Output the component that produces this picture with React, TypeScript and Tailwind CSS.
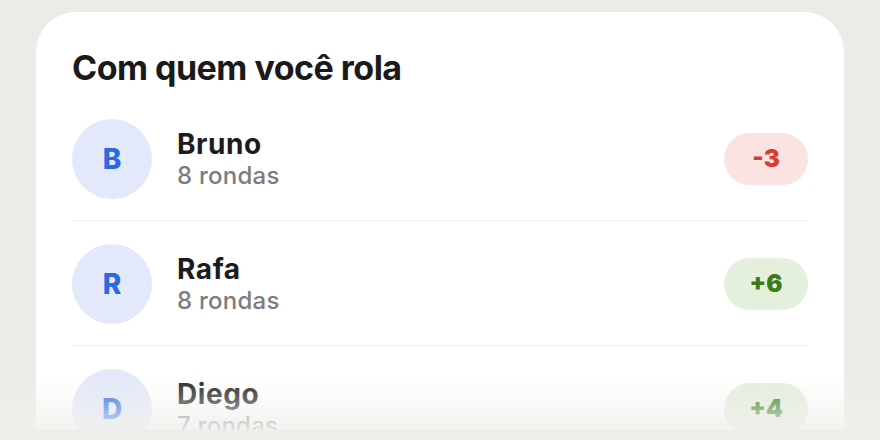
import React from "react"

type Player = {
  name: string
  rounds: number
  score: number
}

const players: Player[] = [
  { name: "Bruno", rounds: 8, score: -3 },
  { name: "Rafa", rounds: 8, score: 6 },
  { name: "Diego", rounds: 7, score: 4 },
  { name: "Lucas", rounds: 5, score: -1 },
]

const PlayerRow = ({ player }: { player: Player }) => {
  const positive = player.score > 0
  return (
    <div className="flex items-center border-b border-[#ededed] pt-[23px] pb-[21px]">
      <div className="flex h-20 w-20 shrink-0 items-center justify-center rounded-full bg-[#e3e9fa]">
        <span className="text-[28px] font-extrabold text-[#2c6ae0]">{player.name[0]}</span>
      </div>
      <div className="ml-[25px] flex flex-1 flex-col">
        <span className="text-[28px] font-bold leading-[32px] tracking-[0.02em] text-[#1c1c1e]">{player.name}</span>
        <span className="mt-[2px] text-[24px] font-medium leading-[28px] tracking-[0.01em] text-[#7c7c80]">{player.rounds} rondas</span>
      </div>
      <div
        className={
          positive
            ? "flex h-[52px] w-[84px] items-center justify-center rounded-full bg-[#e4efdc] text-[24px] font-black text-[#3a7a17]"
            : "flex h-[52px] w-[84px] items-center justify-center rounded-full bg-[#fbe3e2] text-[24px] font-black text-[#d63d33]"
        }
      >
        {positive ? `+${player.score}` : `${player.score}`}
      </div>
    </div>
  )
}

export default function App() {
  return (
    <div className="relative h-[440px] w-[880px] overflow-hidden bg-[#ebebe8] px-9 pt-3 font-['Inter',sans-serif]">
      <div className="h-[470px] rounded-t-[40px] bg-white px-9 pt-[36px]">
        <h2 className="text-[34px] font-bold leading-[39px] tracking-[-0.015em] text-[#1a1a1c]">Com quem você rola</h2>
        <div className="mt-[9px]">
          {players.map((p) => (
            <PlayerRow key={p.name} player={p} />
          ))}
        </div>
      </div>
      <div className="pointer-events-none absolute bottom-0 left-0 right-0 flex flex-col">
        <div className="h-[56px] bg-[linear-gradient(to_bottom,rgba(241,241,238,0)_0%,rgba(241,241,238,0.35)_45%,rgba(240,240,237,0.88)_100%)]" />
        <div className="h-[10px] bg-[#ededea]" />
      </div>
    </div>
  )
}
